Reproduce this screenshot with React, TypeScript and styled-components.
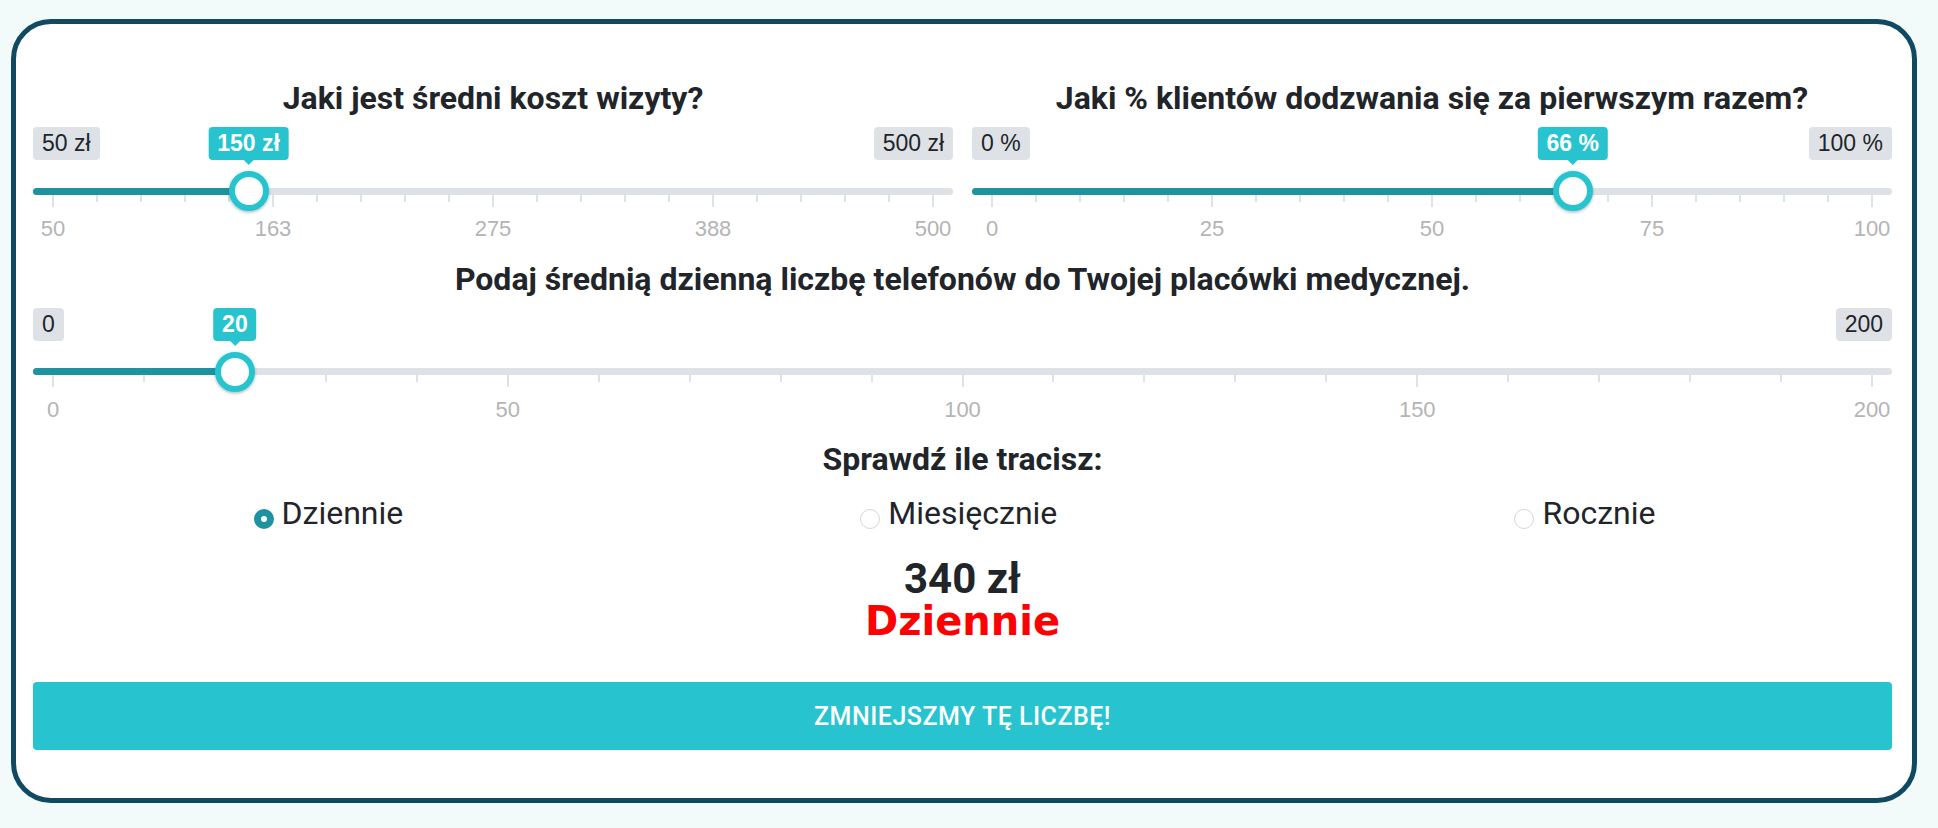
import React from 'react';
import styled, { createGlobalStyle } from 'styled-components';

const GlobalStyle = createGlobalStyle`
  html, body {
    margin: 0;
    padding: 0;
    background: #f3fbfa;
  }
  body {
    font-family: Roboto, "Liberation Sans", Arial, sans-serif;
    color: #212529;
  }
`;

const Page = styled.div`
  padding: 19px 21px 25px 11px;
`;

const Card = styled.div`
  background: #fff;
  border: 5px solid #0f4a62;
  border-radius: 40px;
  padding: 57px 20px 48px 17px;
`;

const TopRow = styled.div`
  display: grid;
  grid-template-columns: 1fr 1fr;
  column-gap: 19px;
`;

const Block = styled.section<{ $gap?: number }>`
  margin-top: ${(p) => p.$gap ?? 0}px;
`;

const Title = styled.h2`
  margin: 0 0 11px;
  font-size: 32px;
  line-height: 35px;
  font-weight: 700;
  text-align: center;
  white-space: nowrap;
`;

const LabelRow = styled.div`
  position: relative;
  display: flex;
  justify-content: space-between;
  height: 33px;
`;

const EdgeLabel = styled.span`
  font-family: "Liberation Sans", Arial, sans-serif;
  font-size: 23px;
  line-height: 33px;
  padding: 0 9px;
  background: #dee2e6;
  border-radius: 4px;
  color: #212529;
`;

const Bubble = styled.span`
  position: absolute;
  top: 0;
  transform: translateX(-50%);
  font-family: "Liberation Sans", Arial, sans-serif;
  font-size: 23px;
  font-weight: 700;
  line-height: 33px;
  padding: 0 9px;
  white-space: nowrap;
  background: #27c4cf;
  color: #fff;
  border-radius: 4px;

  &::after {
    content: '';
    position: absolute;
    left: 50%;
    top: 100%;
    margin-left: -5px;
    border: 5px solid transparent;
    border-bottom: 0;
    border-top-color: #27c4cf;
  }
`;

const Rail = styled.div`
  position: relative;
  height: 40px;
  margin-top: 11px;
  z-index: 1;
`;

const Track = styled.div`
  position: absolute;
  left: 0;
  right: 0;
  top: 16.5px;
  height: 7px;
  border-radius: 4px;
  background: #dee2e6;
`;

const Fill = styled.div`
  position: absolute;
  left: 0;
  top: 16.5px;
  height: 7px;
  border-radius: 4px 0 0 4px;
  background: #1e929e;
`;

const Handle = styled.div`
  position: absolute;
  top: 0;
  width: 40px;
  height: 40px;
  margin-left: -20px;
  box-sizing: border-box;
  border-radius: 50%;
  border: 6px solid #27c4cf;
  background: #fff;
  box-shadow: 0 2px 3px rgba(0, 0, 0, 0.18), 0 0 0 2px rgba(39, 196, 207, 0.08);
`;

const Scale = styled.div`
  position: relative;
  margin: -16.5px 20px 0;
  height: 47px;
`;

const Tick = styled.span<{ $major: boolean }>`
  position: absolute;
  top: 0;
  width: 2px;
  margin-left: -1px;
  height: ${(p) => (p.$major ? 12 : 7)}px;
  background: #dee2e6;
`;

const TickLabel = styled.span`
  position: absolute;
  top: 22.5px;
  transform: translateX(-50%);
  font-family: "Liberation Sans", Arial, sans-serif;
  font-size: 22px;
  line-height: 24px;
  color: #b4b4b4;
`;

const Subheading = styled.h3`
  margin: 20px 0 0;
  font-size: 32px;
  line-height: 35px;
  font-weight: 700;
  text-align: center;
`;

const Options = styled.div`
  display: flex;
  justify-content: space-around;
  margin: 13px 8px 0 -8px;
`;

const Option = styled.label`
  display: flex;
  align-items: center;
  gap: 8px;
  font-size: 32px;
  line-height: 46px;
  cursor: pointer;
`;

const RadioDot = styled.span<{ $checked: boolean }>`
  width: 20px;
  height: 20px;
  box-sizing: border-box;
  border-radius: 50%;
  margin-top: 12px;
  border: ${(p) => (p.$checked ? '7px solid #1e929e' : '1px solid #d3d7db')};
  background: #fff;
`;

const Result = styled.div`
  display: flex;
  flex-direction: column;
  align-items: center;
  margin-top: 22px;
`;

const Amount = styled.div`
  font-size: 42px;
  line-height: 42px;
  font-weight: 700;
`;

const Period = styled.div`
  font-family: "DejaVu Sans", Roboto, sans-serif;
  font-size: 40px;
  line-height: 42px;
  font-weight: 700;
  color: #ff0000;
`;

const CtaButton = styled.button`
  display: block;
  width: 100%;
  height: 68px;
  margin-top: 40px;
  border: 0;
  border-radius: 4px;
  background: #27c4cf;
  color: #fff;
  font-family: Roboto, sans-serif;
  font-size: 25px;
  font-weight: 500;
  letter-spacing: 0.5px;
  text-transform: uppercase;
  cursor: pointer;
`;

interface SliderProps {
  title: string;
  min: number;
  max: number;
  value: number;
  unit: string;
  gap?: number;
}

const at = (frac: number) => `calc(20px + ${frac} * (100% - 40px))`;

function RangeSlider({ title, min, max, value, unit, gap }: SliderProps) {
  const frac = (value - min) / (max - min);
  const ticks = Array.from({ length: 21 }, (_, i) => i);
  const marks = [0, 1, 2, 3, 4].map((i) => Math.round(min + (i * (max - min)) / 4));

  return (
    <Block $gap={gap}>
      <Title>{title}</Title>
      <LabelRow>
        <EdgeLabel>{min}{unit}</EdgeLabel>
        <EdgeLabel>{max}{unit}</EdgeLabel>
        <Bubble style={{ left: at(frac) }}>{value}{unit}</Bubble>
      </LabelRow>
      <Rail>
        <Track />
        <Fill style={{ width: at(frac) }} />
        <Handle style={{ left: at(frac) }} />
      </Rail>
      <Scale>
        {ticks.map((i) => (
          <Tick key={i} $major={i % 5 === 0} style={{ left: `${i * 5}%` }} />
        ))}
        {marks.map((m, i) => (
          <TickLabel key={i} style={{ left: `${i * 25}%` }}>{m}</TickLabel>
        ))}
      </Scale>
    </Block>
  );
}

const periods = ['Dziennie', 'Miesięcznie', 'Rocznie'];

export default function App() {
  const [period, setPeriod] = React.useState('Dziennie');

  return (
    <>
      <GlobalStyle />
      <Page>
        <Card>
          <TopRow>
            <RangeSlider title="Jaki jest średni koszt wizyty?" min={50} max={500} value={150} unit=" zł" />
            <RangeSlider title="Jaki % klientów dodzwania się za pierwszym razem?" min={0} max={100} value={66} unit=" %" />
          </TopRow>
          <RangeSlider
            title="Podaj średnią dzienną liczbę telefonów do Twojej placówki medycznej."
            min={0}
            max={200}
            value={20}
            unit=""
            gap={20}
          />
          <Subheading>Sprawdź ile tracisz:</Subheading>
          <Options>
            {periods.map((p) => (
              <Option key={p} onClick={() => setPeriod(p)}>
                <RadioDot $checked={period === p} />
                {p}
              </Option>
            ))}
          </Options>
          <Result>
            <Amount>340 zł</Amount>
            <Period>{period}</Period>
          </Result>
          <CtaButton>Zmniejszmy tę liczbę!</CtaButton>
        </Card>
      </Page>
    </>
  );
}
